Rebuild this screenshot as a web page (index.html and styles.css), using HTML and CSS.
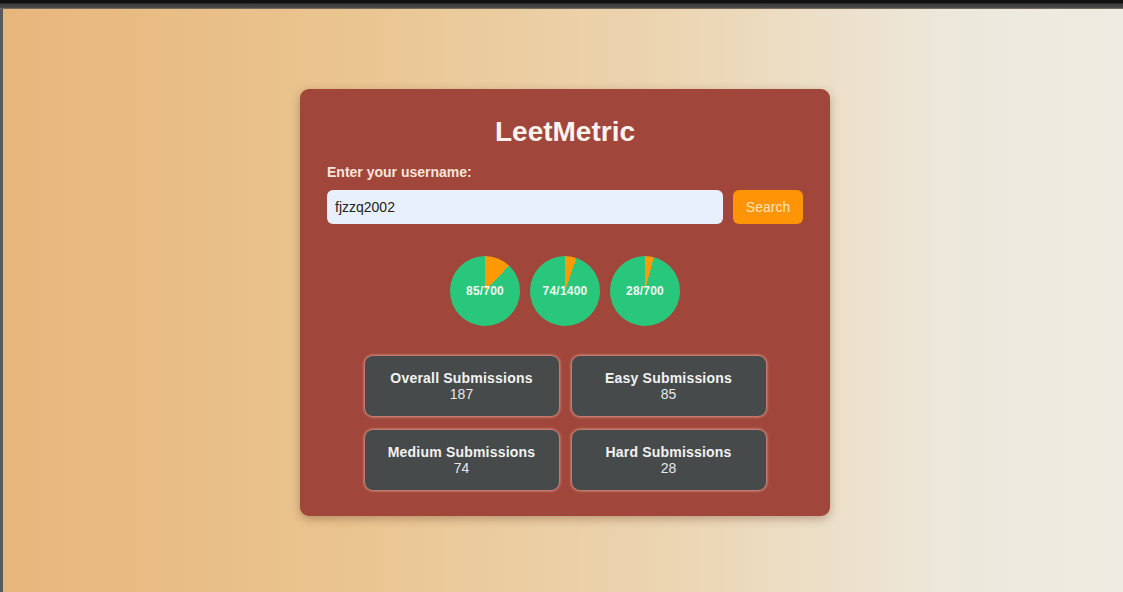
FILE: index.html
```html
<!DOCTYPE html>
<html>
<head>
<meta charset="utf-8">
<link rel="stylesheet" href="styles.css">
</head>
<body>
<div class="topbar"></div>
<div class="frame">
  <div class="side"></div>
  <main class="page">
    <div class="card">
      <h1 class="title">LeetMetric</h1>
      <label class="label" for="user">Enter your username:</label>
      <div class="search-row">
        <input class="input" id="user" type="text" value="fjzzq2002">
        <button class="btn">Search</button>
      </div>
      <div class="pies">
        <div class="pie" style="--p:12.1%"><span>85/700</span></div>
        <div class="pie" style="--p:5.3%"><span>74/1400</span></div>
        <div class="pie" style="--p:4%"><span>28/700</span></div>
      </div>
      <div class="stats">
        <div class="stat"><div class="stat-name">Overall Submissions</div><div class="stat-val">187</div></div>
        <div class="stat"><div class="stat-name">Easy Submissions</div><div class="stat-val">85</div></div>
        <div class="stat"><div class="stat-name">Medium Submissions</div><div class="stat-val">74</div></div>
        <div class="stat"><div class="stat-name">Hard Submissions</div><div class="stat-val">28</div></div>
      </div>
    </div>
  </main>
</div>
</body>
</html>
```
FILE: styles.css
```css
html, body {
  margin: 0;
  padding: 0;
  height: 100%;
  overflow: hidden;
}
body {
  font-family: "Liberation Sans", Arial, sans-serif;
  display: flex;
  flex-direction: column;
  background: #555;
}
.topbar {
  height: 9px;
  background: linear-gradient(#111 0, #111 3px, #3d3d3d 4px, #4a4a48 8px, #9a8a70 9px);
  flex: none;
}
.frame {
  flex: 1;
  display: flex;
}
.side {
  width: 3px;
  background: #5a5a5a;
  flex: none;
}
.page {
  flex: 1;
  background: linear-gradient(to right, #e8b67d 0%, #eac48f 30%, #ecd5b2 60%, #ede8dc 85%, #eeece2 100%);
  display: flex;
  justify-content: center;
  align-items: flex-start;
  padding-top: 80px;
  padding-left: 4px;
}
.card {
  width: 530px;
  box-sizing: border-box;
  background: #a0463a;
  border-radius: 9px;
  box-shadow: 0 3px 10px rgba(90, 40, 20, 0.35);
  padding: 28px 27px 26px;
  display: flex;
  flex-direction: column;
}
.title {
  margin: 0;
  text-align: center;
  color: #fbf3ee;
  font-size: 28px;
  font-weight: bold;
  line-height: 30px;
}
.label {
  margin-top: 17px;
  color: #f6e4dc;
  font-size: 14px;
  font-weight: bold;
  line-height: 16px;
}
.search-row {
  display: flex;
  gap: 10px;
  margin-top: 10px;
}
.input {
  flex: 1;
  height: 34px;
  box-sizing: border-box;
  border: none;
  border-radius: 6px;
  background: #e8f0fe;
  padding: 0 8px;
  font-family: "Liberation Sans", Arial, sans-serif;
  font-size: 14px;
  color: #222;
  outline: none;
}
.btn {
  width: 70px;
  height: 34px;
  border: none;
  border-radius: 6px;
  background: #ff9506;
  color: #ffe3b8;
  font-family: "Liberation Sans", Arial, sans-serif;
  font-size: 14px;
}
.pies {
  display: flex;
  justify-content: center;
  gap: 10px;
  margin-top: 32px;
}
.pie {
  width: 70px;
  height: 70px;
  border-radius: 50%;
  background: conic-gradient(#ff9a05 0 var(--p), #28c77b var(--p) 100%);
  display: flex;
  align-items: center;
  justify-content: center;
}
.pie span {
  color: #f3f7f2;
  font-size: 12px;
  font-weight: bold;
  letter-spacing: 0.2px;
}
.stats {
  display: grid;
  grid-template-columns: 194px 194px;
  justify-content: center;
  gap: 14px 13px;
  margin-top: 30px;
}
.stat {
  height: 60px;
  box-sizing: border-box;
  background: #464a4a;
  border-radius: 8px;
  box-shadow: 0 0 3px 1px rgba(255, 210, 200, 0.6);
  color: #f2f2f2;
  text-align: center;
  display: flex;
  flex-direction: column;
  justify-content: center;
  font-size: 14px;
  line-height: 16px;
}
.stat-name {
  font-weight: bold;
  letter-spacing: 0.2px;
}
.stat-val {
  color: #e8e8e8;
}
```
